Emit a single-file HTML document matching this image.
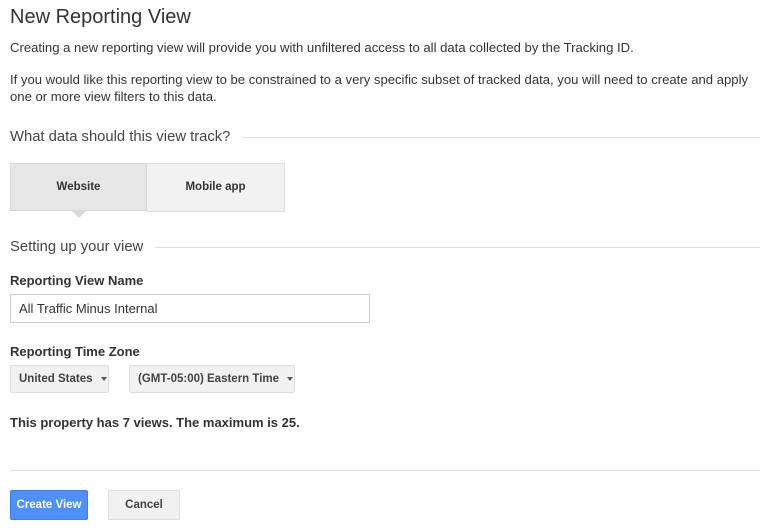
<!DOCTYPE html>
<html><head><style>
body{margin:0;width:765px;height:530px;background:#fff;font-family:"Liberation Sans",sans-serif;color:#222;position:relative;overflow:hidden}
.a{position:absolute;white-space:nowrap}
.p{font-size:13.1px;color:#333}
.h{font-size:14.8px;color:#444}
.line{position:absolute;height:1px;background:#e0e0e0}
.lbl{font-size:13px;font-weight:bold;color:#333}
.dd{position:absolute;top:365px;height:28px;background:#f1f1f1;border:1px solid #ddd;border-radius:2px;font-size:11.5px;font-weight:bold;color:#444;line-height:27px;box-sizing:border-box;padding-left:8px}
.car{display:inline-block;width:0;height:0;border-left:3.5px solid transparent;border-right:3.5px solid transparent;border-top:4px solid #555;vertical-align:middle;margin-left:8px}
</style></head><body>
<div class="a" style="left:10px;top:6px;font-size:20px;color:#333">New Reporting View</div>
<div class="a p" style="left:10px;top:40px">Creating a new reporting view will provide you with unfiltered access to all data collected by the Tracking ID.</div>
<div class="a p" style="left:10px;top:71px;line-height:17px;white-space:normal;width:748px">If you would like this reporting view to be constrained to a very specific subset of tracked data, you will need to create and apply one or more view filters to this data.</div>
<div class="a h" style="left:10px;top:129px">What data should this view track?</div>
<div class="line" style="left:243px;top:137px;width:517px"></div>
<div class="a" style="left:10px;top:163px;width:137px;height:48px;background:#e6e6e6;border:1px solid #d6d6d6;box-sizing:border-box;font-size:11.5px;font-weight:bold;color:#333;text-align:center;line-height:46px">Website</div>
<div class="a" style="left:147px;top:163px;width:138px;height:49px;background:#f2f2f2;border:1px solid #ddd;border-left:none;box-sizing:border-box;font-size:11.5px;font-weight:bold;color:#333;text-align:center;line-height:46px">Mobile app</div>
<div class="a" style="left:72px;top:211px;width:0;height:0;border-left:7px solid transparent;border-right:7px solid transparent;border-top:7px solid #d8d8d8"></div>
<div class="a h" style="left:10px;top:239px">Setting up your view</div>
<div class="line" style="left:155px;top:247px;width:605px"></div>
<div class="a lbl" style="left:10px;top:273px">Reporting View Name</div>
<div class="a" style="left:10px;top:294px;width:360px;height:29px;border:1px solid #ccc;box-sizing:border-box;font-size:13px;color:#333;line-height:27px;padding-left:8px">All Traffic Minus Internal</div>
<div class="a lbl" style="left:10px;top:344px">Reporting Time Zone</div>
<div class="dd" style="left:10px;width:99px">United States<span class="car"></span></div>
<div class="dd" style="left:129px;width:166px">(GMT-05:00) Eastern Time<span class="car"></span></div>
<div class="a lbl" style="left:10px;top:415px">This property has 7 views. The maximum is 25.</div>
<div class="line" style="left:10px;top:470px;width:750px"></div>
<div class="a" style="left:10px;top:490px;width:78px;height:30px;background:#4d90fe;border:1px solid #3f7fe8;border-radius:2px;box-sizing:border-box;color:#fff;font-size:11.5px;font-weight:bold;text-align:center;line-height:28px">Create View</div>
<div class="a" style="left:108px;top:490px;width:72px;height:30px;background:#f1f1f1;border:1px solid #ddd;border-radius:2px;box-sizing:border-box;color:#444;font-size:11.5px;font-weight:bold;text-align:center;line-height:28px">Cancel</div>
</body></html>
